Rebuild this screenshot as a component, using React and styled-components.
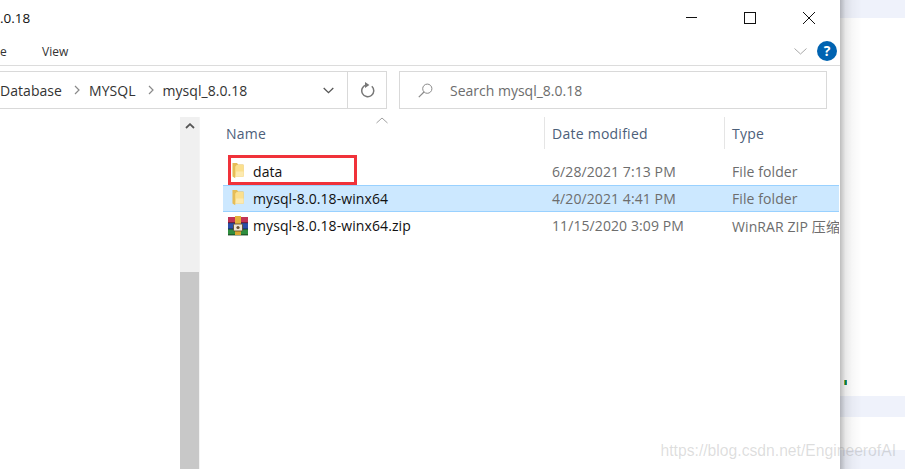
import React from "react";
import styled, { createGlobalStyle } from "styled-components";

const GlobalStyle = createGlobalStyle`
    html, body {
        margin: 0;
        padding: 0;
        background: #fff;
    }
    body {
        font-family: "Open Sans", "Noto Sans CJK SC", sans-serif;
        font-size: 14px;
    }
`

const Page = styled.div`
    position: relative;
    display: flex;
    width: 905px;
    height: 469px;
    overflow: hidden;
`

const Explorer = styled.div`
    width: 840px;
    height: 469px;
    display: flex;
    flex-direction: column;
    background: #fff;
    flex-shrink: 0;
`

// top of the window

const TitleBar = styled.div`
    height: 36px;
    display: flex;
    align-items: center;
    justify-content: space-between;
    color: #111;
    font-size: 13.5px;
`

const WinButtons = styled.div`
    display: flex;
    align-items: center;
    gap: 47px;
    padding-right: 25px;
`

const TabRow = styled.div`
    height: 30px;
    box-sizing: border-box;
    display: flex;
    align-items: center;
    padding-top: 1px;
    border-bottom: 1px solid #dcdcdc;
    font-size: 12px;
    color: #333;
`

const Tab = styled.span`
    width: ${(p) => p.$w}px;
`

const RibbonRight = styled.div`
    margin-left: auto;
    display: flex;
    align-items: center;
    gap: 10px;
    padding-right: 3px;
`

const HelpDot = styled.div`
    width: 20px;
    height: 20px;
    border-radius: 50%;
    background: #0063b1;
    color: #fff;
    font-weight: 700;
    font-size: 14px;
    line-height: 20px;
    text-align: center;
`

const AddressRow = styled.div`
    display: flex;
    gap: 12px;
    padding: 5px 13px 0 0;
`

const AddressBar = styled.div`
    width: 387px;
    height: 38px;
    box-sizing: border-box;
    display: flex;
    align-items: center;
    border: 1px solid #d9d9d9;
    border-left: none;
    color: #333;
    font-size: 14px;
    letter-spacing: 0.05px;
`

const Crumb = styled.span`
    margin-right: ${(p) => p.$gap}px;
`

const CrumbArrow = styled.svg`
    width: 8px;
    height: 10px;
    margin-right: 8px;
    flex-shrink: 0;
`

const AddressEnd = styled.div`
    margin-left: auto;
    display: flex;
    align-items: center;
    height: 100%;
`

const DropDown = styled.div`
    width: 37px;
    display: flex;
    justify-content: center;
`

const Refresh = styled.div`
    width: 38px;
    height: 100%;
    border-left: 1px solid #d9d9d9;
    display: flex;
    align-items: center;
    justify-content: center;
`

const SearchBox = styled.div`
    flex: 1;
    height: 38px;
    box-sizing: border-box;
    display: flex;
    align-items: center;
    gap: 17px;
    padding-left: 18px;
    border: 1px solid #d9d9d9;
    color: #6d6d6d;
    font-size: 14px;
`

// nav pane + file list

const Body = styled.div`
    flex: 1;
    display: flex;
    padding-top: 8px;
    min-height: 0;
`

const NavPane = styled.div`
    width: 180px;
    flex-shrink: 0;
`

const ScrollBar = styled.div`
    width: 19px;
    flex-shrink: 0;
    display: flex;
    flex-direction: column;
    background: #f0f0f0;
    border-right: 1px solid #f4f4f4;
    margin-right: 3px;
`

const ScrollUp = styled.div`
    height: 18px;
    display: flex;
    align-items: center;
    justify-content: center;
`

const ScrollThumb = styled.div`
    margin-top: 137px;
    flex: 1;
    background: #c8c8c8;
`

const ListPane = styled.div`
    position: relative;
    flex: 1;
    min-width: 0;
    overflow: hidden;
`

const Header = styled.div`
    display: grid;
    grid-template-columns: 341px 180px 1fr;
    height: 32px;
    margin-bottom: 9px;
`

const HeaderCell = styled.div`
    display: flex;
    align-items: center;
    padding-left: ${(p) => p.$pad}px;
    border-left: ${(p) => (p.$line ? "1px solid #e5e5e5" : "none")};
    color: #4c607a;
    font-size: 14px;
    letter-spacing: 0.25px;
`

const SortCaret = styled.svg`
    position: absolute;
    left: 173px;
    top: 0;
    width: 12px;
    height: 7px;
`

const Rows = styled.div`
    display: flex;
    flex-direction: column;
    margin-left: 20px;
    margin-right: 1px;
`

const Row = styled.div`
    display: grid;
    grid-template-columns: 322px 179px 1fr;
    align-items: center;
    height: 27px;
    box-sizing: border-box;
    background: ${(p) => (p.$selected ? "#cce8ff" : "transparent")};
    border-top: 1px solid ${(p) => (p.$selected ? "#99d1ff" : "transparent")};
    border-bottom: 1px solid ${(p) => (p.$selected ? "#99d1ff" : "transparent")};
    white-space: nowrap;
    overflow: hidden;
`

const NameCell = styled.div`
    display: flex;
    align-items: center;
    gap: 5px;
    padding-left: 5px;
    color: #111;
    font-size: 14px;
    letter-spacing: 0.09px;
`

const IconSlot = styled.div`
    width: 20px;
    height: 20px;
    display: flex;
    align-items: center;
    justify-content: center;
    flex-shrink: 0;
`

const FolderSvg = styled.svg`
    width: 12px;
    height: 17px;
    margin: 0 1px 3px 0;
`

const InfoCell = styled.div`
    padding-left: ${(p) => p.$pad}px;
    color: #6d6d6d;
    font-size: 14px;
    letter-spacing: 0.09px;
    overflow: hidden;
`

const RedBox = styled.div`
    position: absolute;
    left: 25px;
    top: 38px;
    width: 129px;
    height: 30px;
    box-sizing: border-box;
    border: 3px solid #f0323a;
`

// blog page behind the window

const Backdrop = styled.div`
    position: relative;
    flex: 1;
    display: flex;
    flex-direction: column;
    background: #fff;

    &::before {
        content: "";
        position: absolute;
        left: 0;
        top: 0;
        bottom: 0;
        width: 22px;
        background: linear-gradient(to right, rgba(0, 0, 0, 0.26), rgba(0, 0, 0, 0.09) 25%, rgba(0, 0, 0, 0.03) 55%, rgba(0, 0, 0, 0));
    }
`

const Band = styled.div`
    height: ${(p) => p.$h}px;
    margin-top: ${(p) => p.$top}px;
    background: #eff2fb;
`

const GreenTick = styled.div`
    position: absolute;
    left: 4px;
    top: 380px;
    width: 3px;
    height: 5px;
    background: linear-gradient(to right, #d9a520, #0a7d3a, #1590c0);
`

const Watermark = styled.div`
    position: absolute;
    right: 9px;
    bottom: 9px;
    font-family: "Liberation Sans", sans-serif;
    font-size: 15.7px;
    color: rgba(120, 120, 120, 0.25);
    white-space: nowrap;
`

const Folder = () => (
    <FolderSvg viewBox="0 0 13 18">
        <path d="M0.5 1 L5.5 1 L6.5 2.5 L12.5 2.5 L12.5 15.5 L3.5 15.5 L3.5 17.5 L0.5 15.5 Z" fill="#e6bd57" />
        <path d="M3.5 5 L5 3 L12.5 3 L12.5 15.5 L3.5 15.5 Z" fill="#fbe08e" />
        <path d="M4.5 10 L12.5 10 L12.5 15.5 L4 15.5 Z" fill="#fdeab0" />
    </FolderSvg>
)

const RarIcon = () => (
    <svg width="20" height="20" viewBox="0 0 20 20">
        <rect x="0" y="1" width="20" height="6" fill="#c23355" />
        <rect x="0" y="7" width="20" height="6" fill="#2b4fa8" />
        <rect x="0" y="13" width="20" height="6" fill="#2f8d3f" />
        <rect x="0" y="6.4" width="20" height="0.8" fill="#3a1530" />
        <rect x="0" y="12.6" width="20" height="0.8" fill="#10203f" />
        <rect x="0" y="18.4" width="20" height="1" fill="#14401c" />
        <rect x="7" y="0" width="6" height="9" fill="#e3b23c" />
        <rect x="7" y="14" width="6" height="5" fill="#d9a732" />
        <rect x="5.5" y="8" width="9" height="7" rx="1" fill="#efe6d2" stroke="#5a4020" strokeWidth="0.8" />
        <circle cx="10" cy="11.5" r="1.6" fill="#6a5030" />
    </svg>
)

const Arrow = () => (
    <CrumbArrow viewBox="0 0 8 10">
        <path d="M2 1 L6 5 L2 9" fill="none" stroke="#8a8a8a" strokeWidth="1.2" />
    </CrumbArrow>
)

const files = [
    { name: "data", date: "6/28/2021 7:13 PM", type: "File folder", icon: <Folder /> },
    { name: "mysql-8.0.18-winx64", date: "4/20/2021 4:41 PM", type: "File folder", icon: <Folder />, selected: true },
    { name: "mysql-8.0.18-winx64.zip", date: "11/15/2020 3:09 PM", type: "WinRAR ZIP 压缩文件", icon: <RarIcon /> },
]

export default function App() {
    return (
        <Page>
            <GlobalStyle />
            <Explorer>
                <TitleBar>
                    <span>.0.18</span>
                    <WinButtons>
                        <svg width="12" height="12" viewBox="0 0 12 12">
                            <path d="M1 5.5 H13" stroke="#111" strokeWidth="1" />
                        </svg>
                        <svg width="12" height="12" viewBox="0 0 12 12">
                            <rect x="0.5" y="0.5" width="11" height="11" fill="none" stroke="#111" strokeWidth="1" />
                        </svg>
                        <svg width="12" height="12" viewBox="0 0 12 12">
                            <path d="M0 0 L12 12 M12 0 L0 12" stroke="#111" strokeWidth="1" />
                        </svg>
                    </WinButtons>
                </TitleBar>
                <TabRow>
                    <Tab $w={42}>e</Tab>
                    <Tab $w={40}>View</Tab>
                    <RibbonRight>
                        <svg width="13" height="7" viewBox="0 0 13 7">
                            <path d="M0.5 0.5 L6.5 6 L12.5 0.5" fill="none" stroke="#a8a8a8" strokeWidth="1" />
                        </svg>
                        <HelpDot>?</HelpDot>
                    </RibbonRight>
                </TabRow>
                <AddressRow>
                    <AddressBar>
                        <Crumb $gap={11}>Database</Crumb>
                        <Arrow />
                        <Crumb $gap={11}>MYSQL</Crumb>
                        <Arrow />
                        <Crumb $gap={0}>mysql_8.0.18</Crumb>
                        <AddressEnd>
                            <DropDown>
                                <svg width="11" height="7" viewBox="0 0 11 7">
                                    <path d="M0.7 1 L5.5 5.6 L10.3 1" fill="none" stroke="#555" strokeWidth="1.3" />
                                </svg>
                            </DropDown>
                            <Refresh>
                                <svg width="15" height="16" viewBox="0 0 15 16">
                                    <path d="M11.8 4.3 A6 6 0 1 1 6 3" fill="none" stroke="#777" strokeWidth="1.5" />
                                    <path d="M5 0 L5 6 L9.4 3 Z" fill="#777" />
                                </svg>
                            </Refresh>
                        </AddressEnd>
                    </AddressBar>
                    <SearchBox>
                        <svg width="15" height="15" viewBox="0 0 15 15">
                            <circle cx="9.3" cy="5.7" r="4.6" fill="none" stroke="#8a8a8a" strokeWidth="1" />
                            <path d="M6 9 L0.8 14.2" stroke="#8a8a8a" strokeWidth="1.2" />
                        </svg>
                        <span>Search mysql_8.0.18</span>
                    </SearchBox>
                </AddressRow>
                <Body>
                    <NavPane />
                    <ScrollBar>
                        <ScrollUp>
                            <svg width="10" height="6" viewBox="0 0 10 6">
                                <path d="M1 5 L5 1.2 L9 5" fill="none" stroke="#555" strokeWidth="1.8" />
                            </svg>
                        </ScrollUp>
                        <ScrollThumb />
                    </ScrollBar>
                    <ListPane>
                        <SortCaret viewBox="0 0 12 7">
                            <path d="M0.5 6 L6 1 L11.5 6" fill="none" stroke="#a0a0a0" strokeWidth="1" />
                        </SortCaret>
                        <Header>
                            <HeaderCell $pad={23}>Name</HeaderCell>
                            <HeaderCell $pad={7} $line>Date modified</HeaderCell>
                            <HeaderCell $pad={7} $line>Type</HeaderCell>
                        </Header>
                        <Rows>
                            {files.map((f) => (
                                <Row key={f.name} $selected={f.selected}>
                                    <NameCell>
                                        <IconSlot>{f.icon}</IconSlot>
                                        <span>{f.name}</span>
                                    </NameCell>
                                    <InfoCell $pad={7}>{f.date}</InfoCell>
                                    <InfoCell $pad={8}>{f.type}</InfoCell>
                                </Row>
                            ))}
                        </Rows>
                        <RedBox />
                    </ListPane>
                </Body>
            </Explorer>
            <Backdrop>
                <Band $top={0} $h={18} />
                <Band $top={378} $h={21} />
                <Band $top={33} $h={19} />
                <GreenTick />
            </Backdrop>
            <Watermark>https://blog.csdn.net/EngineerofAI</Watermark>
        </Page>
    );
}
